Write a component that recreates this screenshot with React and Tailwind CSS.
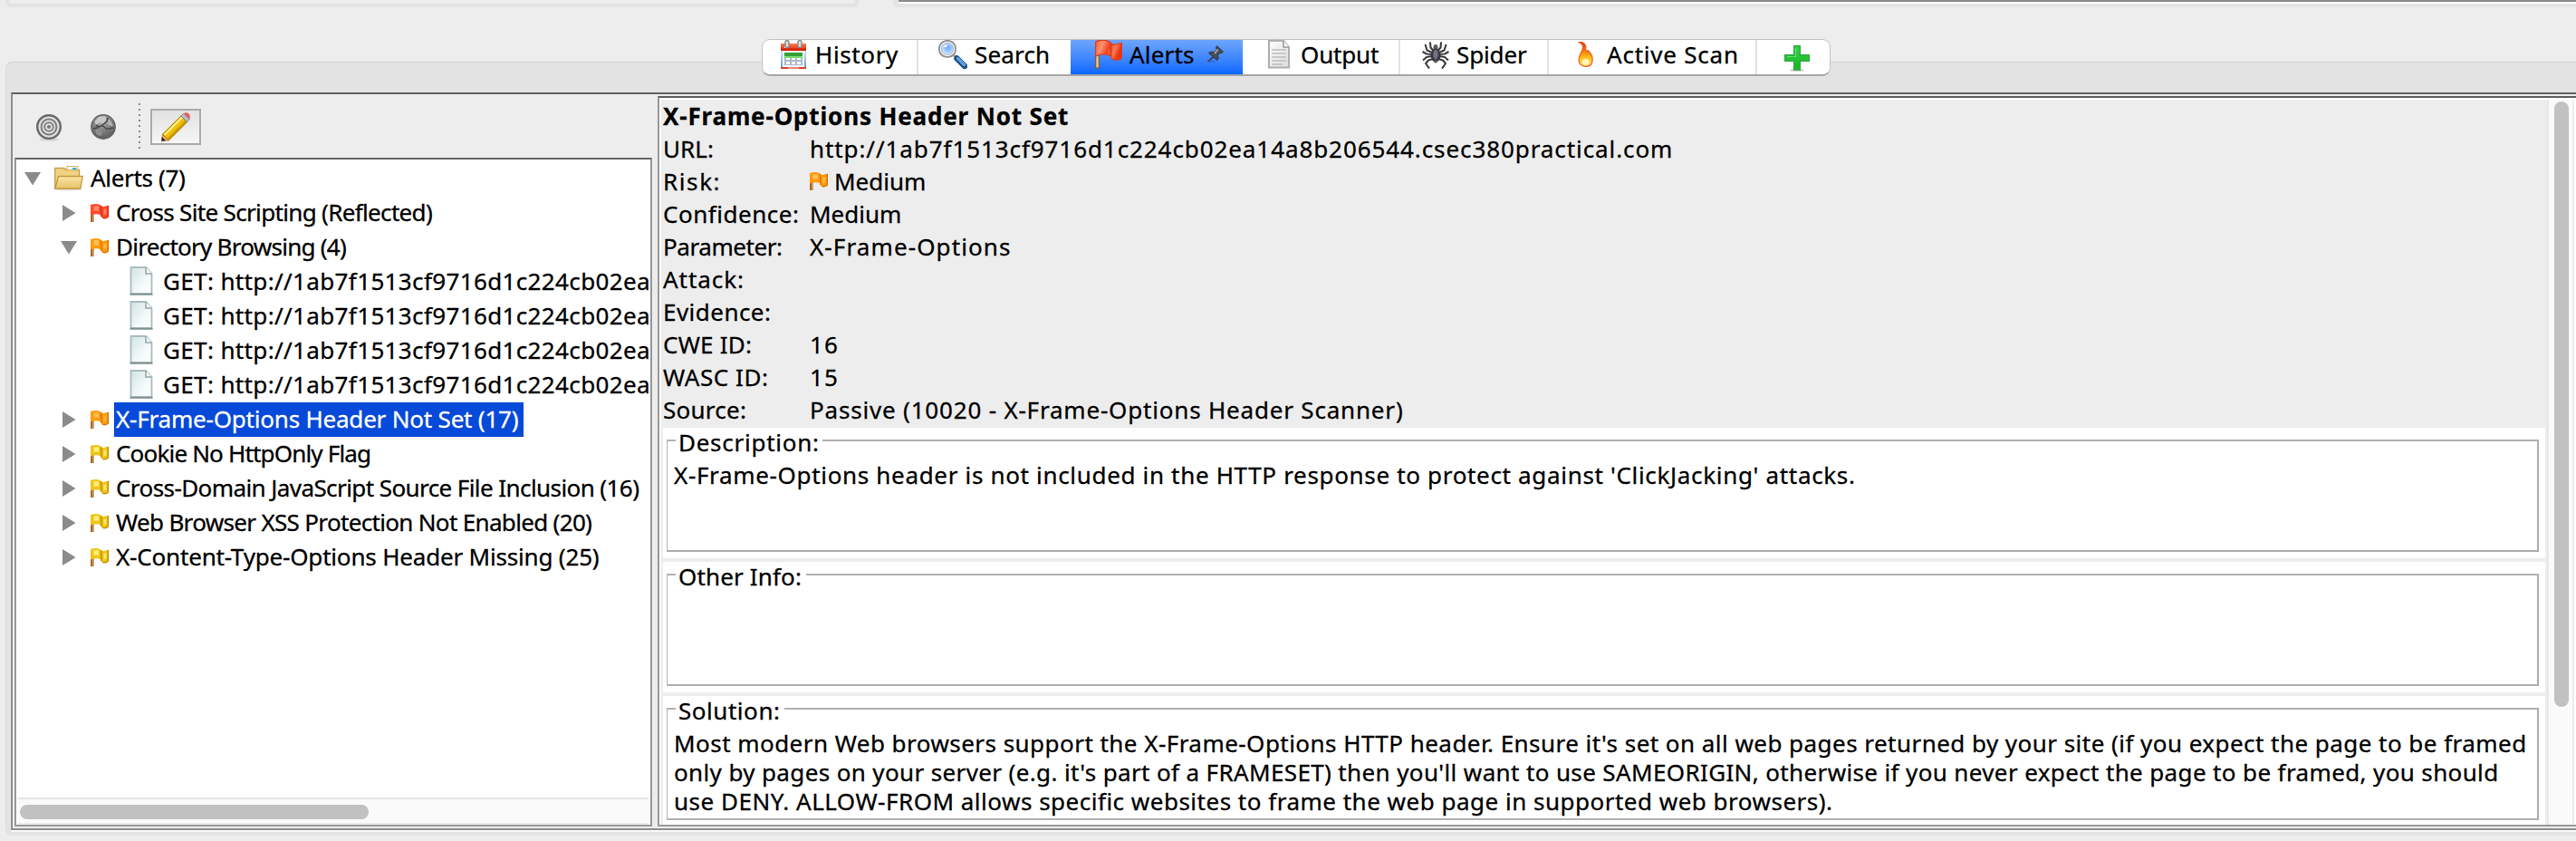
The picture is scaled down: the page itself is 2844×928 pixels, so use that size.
import React from 'react';

/* ---------- icons ---------- */

function CalendarIcon() {
  return (
    <svg className="block shrink-0" width="28" height="32" viewBox="0 0 28 32">
      <defs>
        <linearGradient id="calBody" x1="0" y1="0" x2="0" y2="1">
          <stop offset="0" stopColor="#cfe4f7" />
          <stop offset="1" stopColor="#5b9bd8" />
        </linearGradient>
        <linearGradient id="calTop" x1="0" y1="0" x2="0" y2="1">
          <stop offset="0" stopColor="#ff7a52" />
          <stop offset="1" stopColor="#d92708" />
        </linearGradient>
      </defs>
      <rect x="0" y="12" width="28" height="19" fill="url(#calBody)" />
      <rect x="2" y="12" width="24" height="18" fill="#f1f6fb" />
      <rect x="0" y="4" width="28" height="8" fill="url(#calTop)" />
      <rect x="0" y="9.5" width="28" height="2.5" fill="#d32405" />
      <rect x="0" y="30" width="28" height="2" fill="#d8492f" />
      <rect x="8" y="30" width="12" height="2" fill="#e58a78" />
      <rect x="4" y="14" width="20" height="4" fill="#35a035" />
      <path d="M4 18h20v2H4z" fill="#7fdd70" />
      <path d="M4 20h20v8H4z" fill="#a9b9cb" />
      <path d="M6 20h4v2H6zM12 20h4v2h-4zM18 20h4v2h-4zM6 24h4v3H6zM12 24h4v3h-4zM18 24h4v3h-4z" fill="#fff" />
      <rect x="4" y="7" width="4" height="2" fill="#eaf4ff" />
      <rect x="5" y="0.5" width="4" height="8" rx="2" fill="#dcdcdc" stroke="#8a8a8a" strokeWidth="1.4" />
      <rect x="19" y="0.5" width="4" height="8" rx="2" fill="#dcdcdc" stroke="#8a8a8a" strokeWidth="1.4" />
    </svg>
  );
}

function SearchIcon() {
  return (
    <svg className="block shrink-0" width="32" height="32" viewBox="0 0 32 32">
      <defs>
        <radialGradient id="lens" cx="0.55" cy="0.4" r="0.6">
          <stop offset="0" stopColor="#6fa8ff" />
          <stop offset="0.5" stopColor="#9cc8ff" />
          <stop offset="1" stopColor="#d6ecff" />
        </radialGradient>
      </defs>
      <path d="M17 17l4 4" stroke="#9a9a9a" strokeWidth="3" />
      <path d="M20.5 20.5L29 29" stroke="#1d4f86" strokeWidth="6.4" strokeLinecap="round" />
      <path d="M21.5 20.5L28.5 27.5" stroke="#5fa0dc" strokeWidth="3.4" strokeLinecap="round" />
      <circle cx="10" cy="10" r="9.2" fill="#f4f4f4" stroke="#8f8f8f" strokeWidth="1.8" />
      <circle cx="10" cy="10" r="6.6" fill="url(#lens)" stroke="#b3b9c4" strokeWidth="1" />
      <path d="M5.5 8c1-2 2.6-3 4.500-3l-1 3z" fill="#fff" opacity=".8" />
    </svg>
  );
}

function BigFlagIcon() {
  return (
    <svg className="block shrink-0" width="30" height="32" viewBox="0 0 30 32">
      <defs>
        <linearGradient id="bigFlag" x1="0" y1="0" x2="1" y2="0.3">
          <stop offset="0" stopColor="#ff5a33" />
          <stop offset="0.3" stopColor="#ff8f6e" />
          <stop offset="0.55" stopColor="#f04420" />
          <stop offset="0.8" stopColor="#ff7a58" />
          <stop offset="1" stopColor="#e63610" />
        </linearGradient>
      </defs>
      <rect x="0.7" y="17" width="3.6" height="14" fill="#e8c79a" stroke="#8a5a2b" strokeWidth="1.2" />
      <path d="M0.7 2C5 -0.2 11 0 15 1.6L20 5.5 29.3 3.5V20.5C26 22.5 21.5 22.5 18.5 20.8L17 17.5C12 15.5 6 15.5 0.7 18Z" fill="url(#bigFlag)" stroke="#e23a16" strokeWidth="1.2" />
      <path d="M17.500 5v13" stroke="#c92c0c" strokeWidth="2" opacity=".7" />
    </svg>
  );
}

function PinIcon() {
  return (
    <svg className="block shrink-0" width="20" height="20" viewBox="0 0 20 20">
      <path d="M8.5 12L1.500 18" stroke="#39434f" strokeWidth="1.8" />
      <path d="M2 17.800h7" stroke="#2b5fae" strokeWidth="1.4" opacity=".7" />
      <path d="M11.500 0.800l7 6.400-2.300 1.400-1.200-.3-2.500 3 .7 3.600-1.700 1.500L2.500 8.600l1.800-1.300 4 .2 2.900-3-.700-1.800z" fill="#4a4f57" stroke="#2d3238" strokeWidth="1" />
      <path d="M12.500 4.500l-3.500 4.500" stroke="#a7aeb8" strokeWidth="1.8" />
    </svg>
  );
}

function OutputIcon() {
  return (
    <svg className="block shrink-0" width="24" height="32" viewBox="0 0 24 32">
      <defs>
        <linearGradient id="outDoc" x1="0" y1="0" x2="1" y2="1">
          <stop offset="0" stopColor="#fdfdfd" />
          <stop offset="1" stopColor="#dcdcdc" />
        </linearGradient>
      </defs>
      <path d="M1 1H17L23 8V30.500H1Z" fill="url(#outDoc)" stroke="#b0b0b0" strokeWidth="2" />
      <path d="M17 1V8H23" fill="#fff" stroke="#9b9b9b" strokeWidth="1.6" />
      <path d="M4 11h16M4 15h16M4 19h16M4 23h16M4 27h12" stroke="#bdbdbd" strokeWidth="1.6" />
    </svg>
  );
}

function SpiderIcon() {
  return (
    <svg className="block shrink-0" width="30" height="30" viewBox="0 0 30 30">
      <g fill="none" stroke="#3d3d3f" strokeWidth="2.1" strokeLinejoin="round">
        <path d="M12.500 10L9.500 6.500 9 0.500M17.500 10L20.500 6.500 21 0.500" />
        <path d="M11.500 12L5.500 9.500 3.500 3M18.500 12L24.500 9.500 26.500 3" />
        <path d="M11 14L5 13.500 0.500 11M19 14L25 13.500 29.500 11" />
        <path d="M11 16L5 17 1 20.500M19 16L25 17 29 20.500" />
        <path d="M12 19L7 20.500 4 24 8 29.500M18 19L23 20.500 26 24 22 29.500" />
      </g>
      <ellipse cx="15" cy="6.500" rx="2.600" ry="3.600" fill="#5d5d66" />
      <ellipse cx="15" cy="15" rx="5.400" ry="7.600" fill="#3a3a3f" />
      <ellipse cx="15" cy="14" rx="2.600" ry="5" fill="#73738a" />
      <circle cx="15" cy="21.500" r="2" fill="#55555e" />
    </svg>
  );
}

function FireIcon() {
  return (
    <svg className="block shrink-0" width="17" height="28" viewBox="0 0 17 28">
      <defs>
        <linearGradient id="flame" x1="0" y1="0" x2="0" y2="1">
          <stop offset="0" stopColor="#d92b0a" />
          <stop offset="0.35" stopColor="#f2780c" />
          <stop offset="0.65" stopColor="#ffc21a" />
          <stop offset="1" stopColor="#ffe05a" />
        </linearGradient>
      </defs>
      <path d="M0.5 0.5C6 -0.5 9.5 3 8.7 7.500C8.300 10 9.500 11 11 9.500C14 12 16.200 16 16.200 20C16.200 24.800 13 27.300 8.700 27.300C4 27.300 1 24.500 1 20C1 14 5.500 11 5.500 6C5.500 3.500 3.500 1.500 0.500 0.500Z" fill="url(#flame)" stroke="#ee5a24" strokeWidth="1.2" />
      <ellipse cx="8.6" cy="22.3" rx="4" ry="3.6" fill="#fff6b8" />
    </svg>
  );
}

function PlusIcon() {
  return (
    <svg className="block shrink-0" width="28" height="29" viewBox="0 0 28 29">
      <defs>
        <linearGradient id="plus" x1="0" y1="0" x2="0" y2="1">
          <stop offset="0" stopColor="#35d04a" />
          <stop offset="1" stopColor="#14b81e" />
        </linearGradient>
      </defs>
      <ellipse cx="14" cy="27.5" rx="8" ry="1.3" fill="#c9c9c9" />
      <path d="M10.700 0.700h6.600v10h10v6.600h-10v9.700h-6.600v-9.700h-10v-6.600h10z" fill="url(#plus)" stroke="#2fa83c" strokeWidth="1.4" />
      <path d="M12.500 3v9.500H3" fill="none" stroke="#7be88a" strokeWidth="1.2" opacity=".7" />
    </svg>
  );
}

function TargetIcon() {
  return (
    <svg className="block shrink-0" width="28" height="30" viewBox="0 0 28 30">
      <ellipse cx="14" cy="28" rx="11" ry="1.6" fill="#d2d2d2" />
      <circle cx="14" cy="14" r="12.8" fill="#c8c8c8" stroke="#6a6a6a" strokeWidth="2.4" />
      <circle cx="14" cy="14" r="10.4" fill="none" stroke="#dedede" strokeWidth="1.6" />
      <circle cx="14" cy="14" r="8.400" fill="#e6e6e6" stroke="#7f7f7f" strokeWidth="2" />
      <circle cx="14" cy="14" r="4.800" fill="#e2e2e2" stroke="#808080" strokeWidth="2" />
      <circle cx="14" cy="14" r="2" fill="#757575" />
    </svg>
  );
}

function GlobeIcon() {
  return (
    <svg className="block shrink-0" width="28" height="28" viewBox="0 0 28 28">
      <defs>
        <radialGradient id="globe" cx="0.45" cy="0.25" r="0.8">
          <stop offset="0" stopColor="#b0b0b0" />
          <stop offset="0.6" stopColor="#777777" />
          <stop offset="1" stopColor="#565656" />
        </radialGradient>
      </defs>
      <circle cx="14" cy="14" r="13.2" fill="url(#globe)" stroke="#666" strokeWidth="1.4" />
      <path d="M9 3L16 2 17.500 6 14 10.500 10 9 6 12 4.500 8Z" fill="#c8c8c8" />
      <path d="M19 5l4 3.500 2 5-5-1.500-3-3z" fill="#b0b0b0" />
      <path d="M5 16.500l5 .5 3 3.500-2 4-5-3z" fill="#8e8e8e" />
      <path d="M6 12l3 2 4-1.500M13 12l5-4 1-4M13 12.500l5 4 7-1.500M3 16l6-1.500" stroke="#474747" strokeWidth="1.6" fill="none" />
    </svg>
  );
}

function PencilIcon() {
  return (
    <svg className="block shrink-0" width="32" height="32" viewBox="0 0 32 32">
      <path d="M0.500 31.500L1.500 24.500 8 31Z" fill="#f3b08c" stroke="#c98a4e" strokeWidth="0.8" />
      <path d="M0.300 31.700L0.800 27 5 31.200Z" fill="#222" />
      <path d="M1.500 24.500L22 4 28.500 10.500 8 31Z" fill="#f0c000" stroke="#b98a00" strokeWidth="1.2" />
      <path d="M3.500 25L23.500 5" stroke="#ffee8c" strokeWidth="2.4" />
      <path d="M7.500 29.300L27.300 9.500" stroke="#c99500" strokeWidth="1.8" />
      <path d="M22 4L24.800 1.200 31.300 7.700 28.500 10.500Z" fill="#b9bec8" stroke="#80858f" strokeWidth="1" />
      <path d="M25 1.200C27 -0.300 29 0.300 30.500 1.800C32 3.300 32 5.600 31.200 7.400Z" fill="#ee5a5a" />
    </svg>
  );
}

function FolderIcon() {
  return (
    <svg className="block shrink-0" width="32" height="28" viewBox="0 0 32 28">
      <defs>
        <linearGradient id="folder" x1="0" y1="0" x2="0" y2="1">
          <stop offset="0" stopColor="#fbe6a4" />
          <stop offset="1" stopColor="#e6c06a" />
        </linearGradient>
      </defs>
      <ellipse cx="16" cy="26.3" rx="15" ry="1.3" fill="#e6e6e6" />
      <path d="M0.700 25.300V2.500H11L13 4.500H27.500V25.300Z" fill="#f0d283" stroke="#c9a047" strokeWidth="1.4" />
      <rect x="14" y="0.5" width="12" height="4" fill="#fff" stroke="#d6b25c" strokeWidth="1" />
      <rect x="20" y="2" width="4.5" height="2" fill="#33aaf0" />
      <path d="M0.800 25.300L4.500 11.500H31.200L28.800 25.300Z" fill="url(#folder)" stroke="#c59a40" strokeWidth="1.4" />
    </svg>
  );
}

function FileIcon() {
  return (
    <svg className="block shrink-0" width="26" height="32" viewBox="0 0 26 32">
      <defs>
        <linearGradient id="file" x1="0" y1="0" x2="1" y2="1">
          <stop offset="0" stopColor="#d0e4e4" />
          <stop offset="0.6" stopColor="#f4f9f9" />
          <stop offset="1" stopColor="#ffffff" />
        </linearGradient>
      </defs>
      <path d="M0 31h26" stroke="#b9c4c4" strokeWidth="1.6" />
      <path d="M1.500 1H18L24.500 8V30.500H1.500Z" fill="url(#file)" stroke="#a9bcbc" strokeWidth="1.8" />
      <path d="M18 1V8H24.500" fill="#fff" stroke="#93a9a9" strokeWidth="1.6" />
      <path d="M1 30.500h24" stroke="#7e9090" strokeWidth="2" />
    </svg>
  );
}

const FLAG = {
  red: ['#ff4a2c', '#ff8a6b', '#d42f12'],
  orange: ['#ff9a0c', '#ffbf55', '#d97800'],
  yellow: ['#f0c419', '#fff07a', '#bf9200'],
};

function FlagIcon({ color }) {
  const [base, light, dark] = FLAG[color];
  return (
    <svg className="block shrink-0" width="20" height="20" viewBox="0 0 20 20">
      <rect x="0" y="11" width="3.6" height="9" fill="#a5692f" />
      <rect x="2.2" y="12" width="1.4" height="8" fill="#d9a465" />
      <path d="M0 1C4 -0.300 8 -0.300 11 1.200L13.500 3.300 20 1.500V14C17.500 16.200 14 16.200 12 14.500L11 12C7.500 10.800 3.500 11 0 12.500Z" fill={base} />
      <path d="M3.500 2.500c2-.7 4-.7 5.500 0v5.500c-1.800-.6-3.600-.6-5.500 0z" fill={light} />
      <path d="M14.500 6l3-.8v6.300l-3 .8z" fill={light} opacity=".8" />
      <path d="M11.800 2.500v11.500M19.300 2v12M13 15.200c2 1 4.500.6 6.500-1.200" stroke={dark} strokeWidth="1.5" fill="none" />
    </svg>
  );
}

function Triangle({ open }) {
  return (
    <svg className="block shrink-0" width="18" height="18" viewBox="0 0 18 18">
      {open ? <path d="M0 2H18L9 16.500Z" fill="#8b8b8b" /> : <path d="M2 0V18L16.500 9Z" fill="#8b8b8b" />}
    </svg>
  );
}

/* ---------- tabs ---------- */

function Tab({ className, children }) {
  return <div className={'flex h-full shrink-0 items-start ' + className}>{children}</div>;
}

function Tabs() {
  return (
    <div className="relative z-10 mt-[35px] ml-[841px] flex h-[41px] w-[1180px] overflow-hidden rounded-[9px] border border-[#c4c4c4] border-b-2 border-b-[#a6a6a6] bg-white leading-[32px]">
      <Tab className="w-[172px] border-r-2 border-[#e2e2e2] pl-[20px]">
        <CalendarIcon />
        <span className="ml-[10px] tracking-[0.62px]">History</span>
      </Tab>
      <Tab className="w-[168px] pl-[22px]">
        <SearchIcon />
        <span className="ml-[8px] tracking-[0.16px]">Search</span>
      </Tab>
      <Tab className="w-[190px] bg-linear-to-b from-[#6ea5fb] to-[#0466ff] pl-[27px]">
        <BigFlagIcon />
        <span className="ml-[8px] tracking-[0.18px]">Alerts</span>
        <span className="mt-[6px] ml-[13px]">
          <PinIcon />
        </span>
      </Tab>
      <Tab className="w-[174px] border-r-2 border-[#e2e2e2] pl-[28px]">
        <OutputIcon />
        <span className="ml-[12px] tracking-[-0.16px]">Output</span>
      </Tab>
      <Tab className="w-[164px] border-r-2 border-[#e2e2e2] pl-[24px]">
        <span className="mt-[2px]">
          <SpiderIcon />
        </span>
        <span className="ml-[8px] tracking-[-0.12px]">Spider</span>
      </Tab>
      <Tab className="w-[230px] border-r-2 border-[#e2e2e2] pl-[32px]">
        <span className="mt-[2px]">
          <FireIcon />
        </span>
        <span className="ml-[15px] tracking-[0.78px]">Active Scan</span>
      </Tab>
      <Tab className="w-[80px] pt-[6px] pl-[30px]">
        <PlusIcon />
      </Tab>
    </div>
  );
}

/* ---------- alert tree ---------- */

const ALERTS = [
  { color: 'red', text: 'Cross Site Scripting (Reflected)', cls: 'tracking-[-0.66px]' },
  { color: 'orange', text: 'Directory Browsing (4)', cls: 'tracking-[-0.73px]', open: true, children: 4 },
  { color: 'orange', text: 'X-Frame-Options Header Not Set (17)', cls: 'tracking-[-0.2px]', selected: true },
  { color: 'yellow', text: 'Cookie No HttpOnly Flag', cls: 'tracking-[-0.82px]' },
  { color: 'yellow', text: 'Cross-Domain JavaScript Source File Inclusion (16)', cls: 'tracking-[-0.58px]' },
  { color: 'yellow', text: 'Web Browser XSS Protection Not Enabled (20)', cls: 'tracking-[-0.67px]' },
  { color: 'yellow', text: 'X-Content-Type-Options Header Missing (25)', cls: 'tracking-[-0.18px]' },
];

function AlertRow({ alert }) {
  return (
    <>
      <div className="flex h-[38px] items-center pl-[49px]">
        <Triangle open={alert.open} />
        <span className="ml-[15px] h-[20px]">
          <FlagIcon color={alert.color} />
        </span>
        <span
          className={
            'ml-[6px] h-[38px] shrink-0 pl-[2px] leading-[36px] ' +
            alert.cls +
            (alert.selected ? ' w-[452px] bg-[#0749d9] text-white' : '')
          }
        >
          {alert.text}
        </span>
      </div>
      {Array.from({ length: alert.children || 0 }, (_, i) => (
        <div key={i} className="flex h-[38px] items-start pl-[125px]">
          <span className="mt-[2px]">
            <FileIcon />
          </span>
          <span className="ml-[11px] leading-[36px] tracking-[0.363px]">
            GET: http://1ab7f1513cf9716d1c224cb02ea
          </span>
        </div>
      ))}
    </>
  );
}

function AlertTree() {
  return (
    <div className="flex h-[738px] w-[704px] flex-col border-2 border-[#979797] border-t-[#626262] bg-white">
      <div className="flex-1 overflow-hidden pt-[2px] whitespace-nowrap">
        <div className="flex h-[38px] items-center pl-[9px]">
          <Triangle open />
          <span className="ml-[15px]">
            <FolderIcon />
          </span>
          <span className="ml-[8px] h-[38px] leading-[36px] tracking-[-0.33px]">Alerts (7)</span>
        </div>
        {ALERTS.map((a) => (
          <AlertRow key={a.text} alert={a} />
        ))}
      </div>
      <div className="mx-[2px] h-[30px] border-y-2 border-[#e6e6e6] border-b-[#ededed] bg-[#fafafa] pt-[6px] pl-[2px]">
        <div className="h-[16px] w-[385px] rounded-full bg-[#c1c1c1]" />
      </div>
    </div>
  );
}

function Toolbar() {
  return (
    <div className="flex h-[70px] items-start pl-[26px]">
      <span className="mt-[22px]">
        <TargetIcon />
      </span>
      <span className="mt-[22px] ml-[32px]">
        <GlobeIcon />
      </span>
      <div className="mt-[10px] ml-[25px] h-[50px] w-[2px] bg-[repeating-linear-gradient(to_bottom,#8a8a8a_0_2px,transparent_2px_6px)]" />
      <div className="mt-[16px] ml-[11px] flex h-[40px] w-[56px] items-start border-2 border-[#ababab] bg-linear-to-b from-[#e2e2e2] to-[#f6f6f6] pt-[2px] pl-[10px]">
        <PencilIcon />
      </div>
    </div>
  );
}

/* ---------- alert details ---------- */

const DETAILS = [
  ['URL:', 'tracking-[0.07px]', 'http://1ab7f1513cf9716d1c224cb02ea14a8b206544.csec380practical.com', 'tracking-[0.915px]'],
  ['Risk:', 'tracking-[1.6px]', 'Medium', 'tracking-[0px]', 'orange'],
  ['Confidence:', 'tracking-[0.52px]', 'Medium', 'tracking-[0px]'],
  ['Parameter:', 'tracking-[-0.43px]', 'X-Frame-Options', 'tracking-[1.11px]'],
  ['Attack:', 'tracking-[0.94px]', '', ''],
  ['Evidence:', 'tracking-[0.47px]', '', ''],
  ['CWE ID:', 'tracking-[0.23px]', '16', 'tracking-[1.1px]'],
  ['WASC ID:', 'tracking-[0.57px]', '15', 'tracking-[1.1px]'],
  ['Source:', 'tracking-[0.26px]', 'Passive (10020 - X-Frame-Options Header Scanner)', 'tracking-[0.81px]'],
];

const DESCRIPTION = [
  ["X-Frame-Options header is not included in the HTTP response to protect against 'ClickJacking' attacks.", 'tracking-[0.67px]'],
];

const SOLUTION = [
  [
    "Most modern Web browsers support the X-Frame-Options HTTP header. Ensure it's set on all web pages returned by your site (if you expect the page to be framed",
    'tracking-[0.46px]',
  ],
  [
    "only by pages on your server (e.g. it's part of a FRAMESET) then you'll want to use SAMEORIGIN, otherwise if you never expect the page to be framed, you should",
    'tracking-[0.37px]',
  ],
  ['use DENY. ALLOW-FROM allows specific websites to frame the web page in supported web browsers).', 'tracking-[0.5px]'],
];

function Section({ title, titleClass, lines }) {
  return (
    <section className="h-[144px] shrink-0 bg-white pr-[7px] pl-[4px]">
      <fieldset className="h-[137px] border-2 border-l border-[#b0b0b0]">
        <legend className={'ml-[9px] h-[28px] pt-[4px] pl-[3px] leading-[24px] ' + titleClass}>{title}</legend>
        <div className="pt-[8px] pl-[7px] leading-[32px] whitespace-nowrap">
          {lines.map(([text, cls]) => (
            <p key={text} className={cls}>
              {text}
            </p>
          ))}
        </div>
      </fieldset>
    </section>
  );
}

function Details() {
  return (
    <div className="ml-[6px] flex h-[806px] w-[2118px] border-y-2 border-l-2 border-[#979797] border-t-[#626262] bg-white pt-[2px] pl-[2px]">
      <div className="h-[800px] w-[2082px] shrink-0 overflow-hidden bg-[#ededed] pl-[2px]">
        <div className="h-[362px] leading-[36px] whitespace-nowrap">
          <h2 className="font-bold tracking-[0.845px]">X-Frame-Options Header Not Set</h2>
          {DETAILS.map(([label, labelCls, value, valueCls, flag]) => (
            <div key={label} className="flex h-[36px]">
              <span className={'w-[162px] shrink-0 ' + labelCls}>{label}</span>
              {flag && (
                <span className="mt-[8px] mr-[7px]">
                  <FlagIcon color={flag} />
                </span>
              )}
              <span className={valueCls}>{value}</span>
            </div>
          ))}
        </div>
        <div className="mr-[2px] flex flex-col gap-[4px]">
          <Section title="Description:" titleClass="w-[162px] tracking-[0.74px]" lines={DESCRIPTION} />
          <Section title="Other Info:" titleClass="w-[144px] tracking-[0.15px]" lines={[]} />
          <Section title="Solution:" titleClass="w-[120px] tracking-[0.54px]" lines={SOLUTION} />
        </div>
      </div>
      <div className="h-[800px] w-[30px] shrink-0 border-r-2 border-l-2 border-[#e8e8e8] border-r-[#ededed] bg-[#fafafa] pt-[2px] pl-[6px]">
        <div className="h-[668px] w-[16px] rounded-full bg-[#c1c1c1]" />
      </div>
    </div>
  );
}

export default function App() {
  return (
    <div className="flex h-[928px] w-[2844px] flex-col overflow-hidden bg-[#ededed] font-['Noto_Sans','Open_Sans',sans-serif] text-[26px] text-black [-webkit-text-stroke:0.3px]">
      <div className="flex h-[8px] shrink-0 pl-[6px]">
        <div className="w-[942px] rounded-b-[6px] border-x-4 border-b-4 border-[#e3e3e3]" />
        <div className="ml-[38px] flex-1 rounded-bl-[6px] border-b-4 border-l-[6px] border-[#e3e3e3]">
          <div className="h-[4px] border-t-2 border-[#8a8a8a] bg-white" />
        </div>
      </div>
      <Tabs />
      <main className="-mt-[16px] ml-[6px] h-[854px] w-[2838px] shrink-0 rounded-l-[8px] border-t border-l border-[#d0d0d0] border-l-[#dcdcdc] bg-[#e3e3e3] pt-[33px] pl-[5px]">
        <div className="flex h-[814px] border-y-2 border-l-2 border-[#8f8f8f] border-t-[#606060] bg-[#ededed]">
          <div className="w-[706px] shrink-0">
            <Toolbar />
            <div className="pl-[2px]">
              <AlertTree />
            </div>
          </div>
          <div className="shrink-0 pt-[2px]">
            <Details />
          </div>
        </div>
        <div className="h-[2px] bg-[#f7f7f7]" />
      </main>
    </div>
  );
}
